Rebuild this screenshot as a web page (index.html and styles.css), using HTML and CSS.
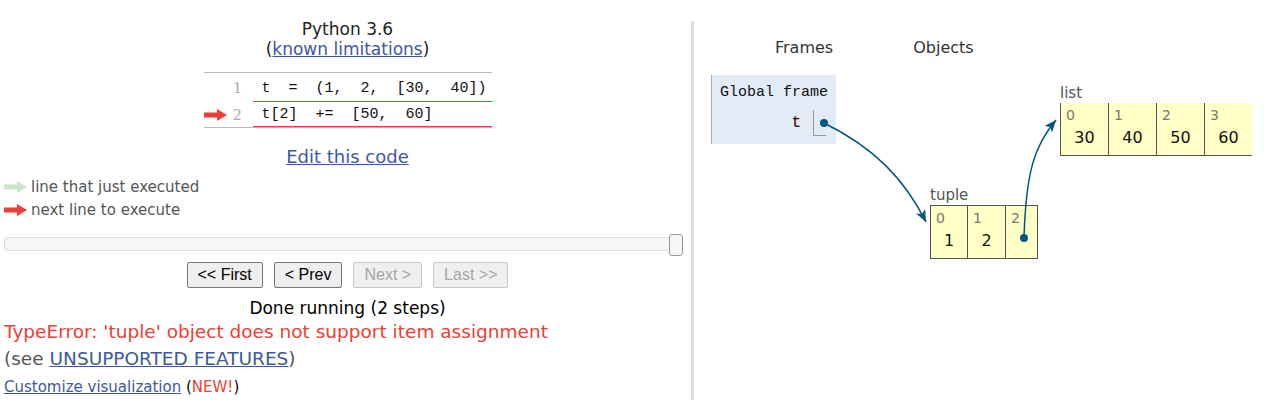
FILE: index.html
```html
<!DOCTYPE html>
<html>
<head>
<meta charset="utf-8">
<link rel="stylesheet" href="styles.css">
</head>
<body>
<div class="page">
  <div class="left">
    <div class="title">Python 3.6</div>
    <div class="limits">(<a href="#">known limitations</a>)</div>
    <div class="code">
      <div class="row row1">
        <div class="gut"></div>
        <div class="num">1</div>
        <div class="src">t = (1, 2, [30, 40])</div>
      </div>
      <div class="row row2">
        <div class="gut">
          <svg width="23" height="12" viewBox="0 0 23 12"><path d="M0 3.5 H13 V0 L23 6 L13 12 V8.5 H0 Z" fill="#e93f34"/></svg>
        </div>
        <div class="num">2</div>
        <div class="src">t[2] += [50, 60]</div>
      </div>
    </div>
    <div class="edit"><a href="#">Edit this code</a></div>
    <div class="legend">
      <div class="leg">
        <svg width="23" height="12" viewBox="0 0 23 12"><path d="M0 3.5 H13 V0 L23 6 L13 12 V8.5 H0 Z" fill="#c9e6ca"/></svg>
        <span>line that just executed</span>
      </div>
      <div class="leg">
        <svg width="23" height="12" viewBox="0 0 23 12"><path d="M0 3.5 H13 V0 L23 6 L13 12 V8.5 H0 Z" fill="#e93f34"/></svg>
        <span>next line to execute</span>
      </div>
    </div>
    <div class="slider">
      <div class="track"></div>
      <div class="handle"></div>
    </div>
    <div class="buttons">
      <button class="btn">&lt;&lt; First</button>
      <button class="btn">&lt; Prev</button>
      <button class="btn off">Next &gt;</button>
      <button class="btn off">Last &gt;&gt;</button>
    </div>
    <div class="done">Done running (2 steps)</div>
    <div class="error">TypeError: 'tuple' object does not support item assignment</div>
    <div class="see">(see <a href="#">UNSUPPORTED FEATURES</a>)</div>
    <div class="custom"><a href="#">Customize visualization</a> (<span class="new">NEW!</span>)</div>
  </div>
  <div class="divider"></div>
  <div class="right">
    <div class="headers">
      <span class="hdr-frames">Frames</span>
      <span class="hdr-objects">Objects</span>
    </div>
    <div class="frame">
      <div class="frame-name">Global frame</div>
      <div class="var">
        <span class="var-name">t</span>
        <span class="var-val"></span>
      </div>
    </div>
    <div class="obj obj-tuple">
      <div class="obj-label">tuple</div>
      <div class="tuple-box">
        <div class="cell c1"><div class="idx">0</div><div class="val">1</div></div>
        <div class="cell c2"><div class="idx">1</div><div class="val">2</div></div>
        <div class="cell c3"><div class="idx">2</div><div class="val"></div></div>
      </div>
    </div>
    <div class="obj obj-list">
      <div class="obj-label">list</div>
      <div class="list-box">
        <div class="lcell"><div class="idx">0</div><div class="val">30</div></div>
        <div class="lcell"><div class="idx">1</div><div class="val">40</div></div>
        <div class="lcell"><div class="idx">2</div><div class="val">50</div></div>
        <div class="lcell"><div class="idx">3</div><div class="val">60</div></div>
      </div>
    </div>
  </div>
  <svg class="arrows" width="1274" height="400" viewBox="0 0 1274 400">
    <defs>
      <marker id="ah" markerUnits="userSpaceOnUse" markerWidth="14" markerHeight="12" refX="12" refY="5" orient="auto">
        <path d="M0 0 L12 5 L0 10 L3 5 Z" fill="#005583"/>
      </marker>
    </defs>
    <path d="M824 123 C875 148 905 180 926 222" fill="none" stroke="#005583" stroke-width="1.5" marker-end="url(#ah)"/>
    <path d="M1024 238 C1026 170 1035 145 1056 120" fill="none" stroke="#005583" stroke-width="1.5" marker-end="url(#ah)"/>
    <circle cx="824" cy="123" r="4" fill="#005583"/>
    <circle cx="1024" cy="238" r="4" fill="#005583"/>
  </svg>
</div>
</body>
</html>
```

FILE: styles.css
```css
* { box-sizing: border-box; }
html, body { margin: 0; padding: 0; background: #fff; }
body { font-family: "DejaVu Sans", Verdana, sans-serif; color: #000; }
a { color: #3d58a2; text-decoration: underline; }

.page { position: relative; display: flex; width: 1274px; height: 400px; overflow: hidden; }

.left { width: 691px; flex: none; padding-left: 4px; display: flex; flex-direction: column; }
.title { font-size: 17px; line-height: 20px; padding-top: 19px; text-align: center; color: #222; }
.limits { font-size: 17px; line-height: 20px; text-align: center; color: #222; }

.code { align-self: center; width: 288px; margin-top: 13px; border-top: 1px solid #bbb; border-bottom: 1px solid #bbb; }
.row { display: grid; grid-template-columns: 25px 24px 1fr; }
.row1 { height: 29px; }
.row2 { height: 25px; }
.gut { display: flex; align-items: center; }
.num { font-family: "Liberation Serif", serif; font-size: 17px; color: #aaa; text-align: right; padding-right: 11px; display: flex; align-items: center; justify-content: flex-end; }
.src { font-family: "Liberation Mono", monospace; font-size: 15px; word-spacing: 9px; white-space: pre; padding-left: 9px; border-bottom: 1px solid #e93f34; display: flex; align-items: center; color: #111; }
.row1 .src { padding-top: 2px; }

.edit { text-align: center; font-size: 18px; line-height: 22px; margin-top: 18px; }

.legend { margin-top: 7px; }
.leg { display: flex; align-items: center; height: 23px; font-size: 15px; color: #555; }
.leg svg { margin-right: 4px; }

.slider { position: relative; height: 22px; margin-top: 13px; width: 679px; }
.track { position: absolute; left: 0; top: 3px; width: 672px; height: 14px; border: 1px solid #ddd; border-radius: 4px; background: #f6f6f6; }
.handle { position: absolute; left: 665px; top: 0; width: 14px; height: 22px; border: 1px solid #999; border-radius: 3px; background: #f6f6f6; }

.buttons { display: flex; justify-content: center; gap: 11px; margin-top: 6px; }
.btn { font-family: "Liberation Sans", Arial, sans-serif; font-size: 16px; height: 26px; padding: 0 10px; border: 1px solid #767676; border-radius: 2px; background: #efefef; color: #000; }
.btn.off { border-color: #c8c8c8; color: #a6a6a6; background: #efefef; }

.done { text-align: center; font-size: 17px; line-height: 22px; margin-top: 9px; }
.error { font-size: 18.5px; line-height: 24px; color: #e93f34; margin-top: 1px; }
.see { font-size: 18.5px; line-height: 24px; color: #555; margin-top: 3px; }
.custom { font-size: 15px; line-height: 20px; margin-top: 6px; color: #000; }
.new { color: #e93f34; }

.divider { width: 3px; flex: none; background: #ddd; margin-top: 21px; height: 379px; }

.right { position: relative; flex: 1; padding: 38px 0 0 17px; }
.headers { display: flex; height: 20px; line-height: 20px; font-size: 16px; color: #333; padding-left: 64px; }
.hdr-objects { margin-left: 80px; }

.frame { margin-top: 17px; width: 125px; height: 69px; background: #e2ebf6; border-left: 1px solid #aaa; padding: 9px 10px 0 8px; }
.frame-name { font-family: "Liberation Mono", monospace; font-size: 15px; line-height: 18px; color: #111; white-space: nowrap; }
.var { display: flex; justify-content: flex-end; align-items: center; margin-top: 8px; gap: 12px; }
.var-name { font-family: "Liberation Mono", monospace; font-size: 16px; color: #300; }
.var-val { width: 13px; height: 26px; border-left: 1px solid #999; border-bottom: 1px solid #999; }

.obj { position: absolute; }
.obj-tuple { left: 236px; top: 185px; }
.obj-list { left: 366px; top: 83px; }
.obj-label { font-size: 15px; line-height: 20px; color: #555; }

.tuple-box { display: flex; border: 1px solid #555; background: #ffffc6; height: 54px; }
.cell { height: 52px; padding: 4px 0 0 5px; }
.cell + .cell { border-left: 1px solid #555; }
.c1 { width: 36px; }
.c2 { width: 38px; }
.c3 { width: 32px; }

.list-box { display: flex; background: #ffffc6; border-bottom: 1px solid #555; height: 53px; }
.lcell { width: 48px; height: 52px; border-left: 1px solid #555; padding: 4px 0 0 5px; }

.idx { font-size: 14px; line-height: 16px; color: #777; }
.val { font-size: 16px; line-height: 22px; margin-top: 4px; text-align: center; padding-right: 5px; color: #111; }

.arrows { position: absolute; left: 0; top: 0; pointer-events: none; }
```
